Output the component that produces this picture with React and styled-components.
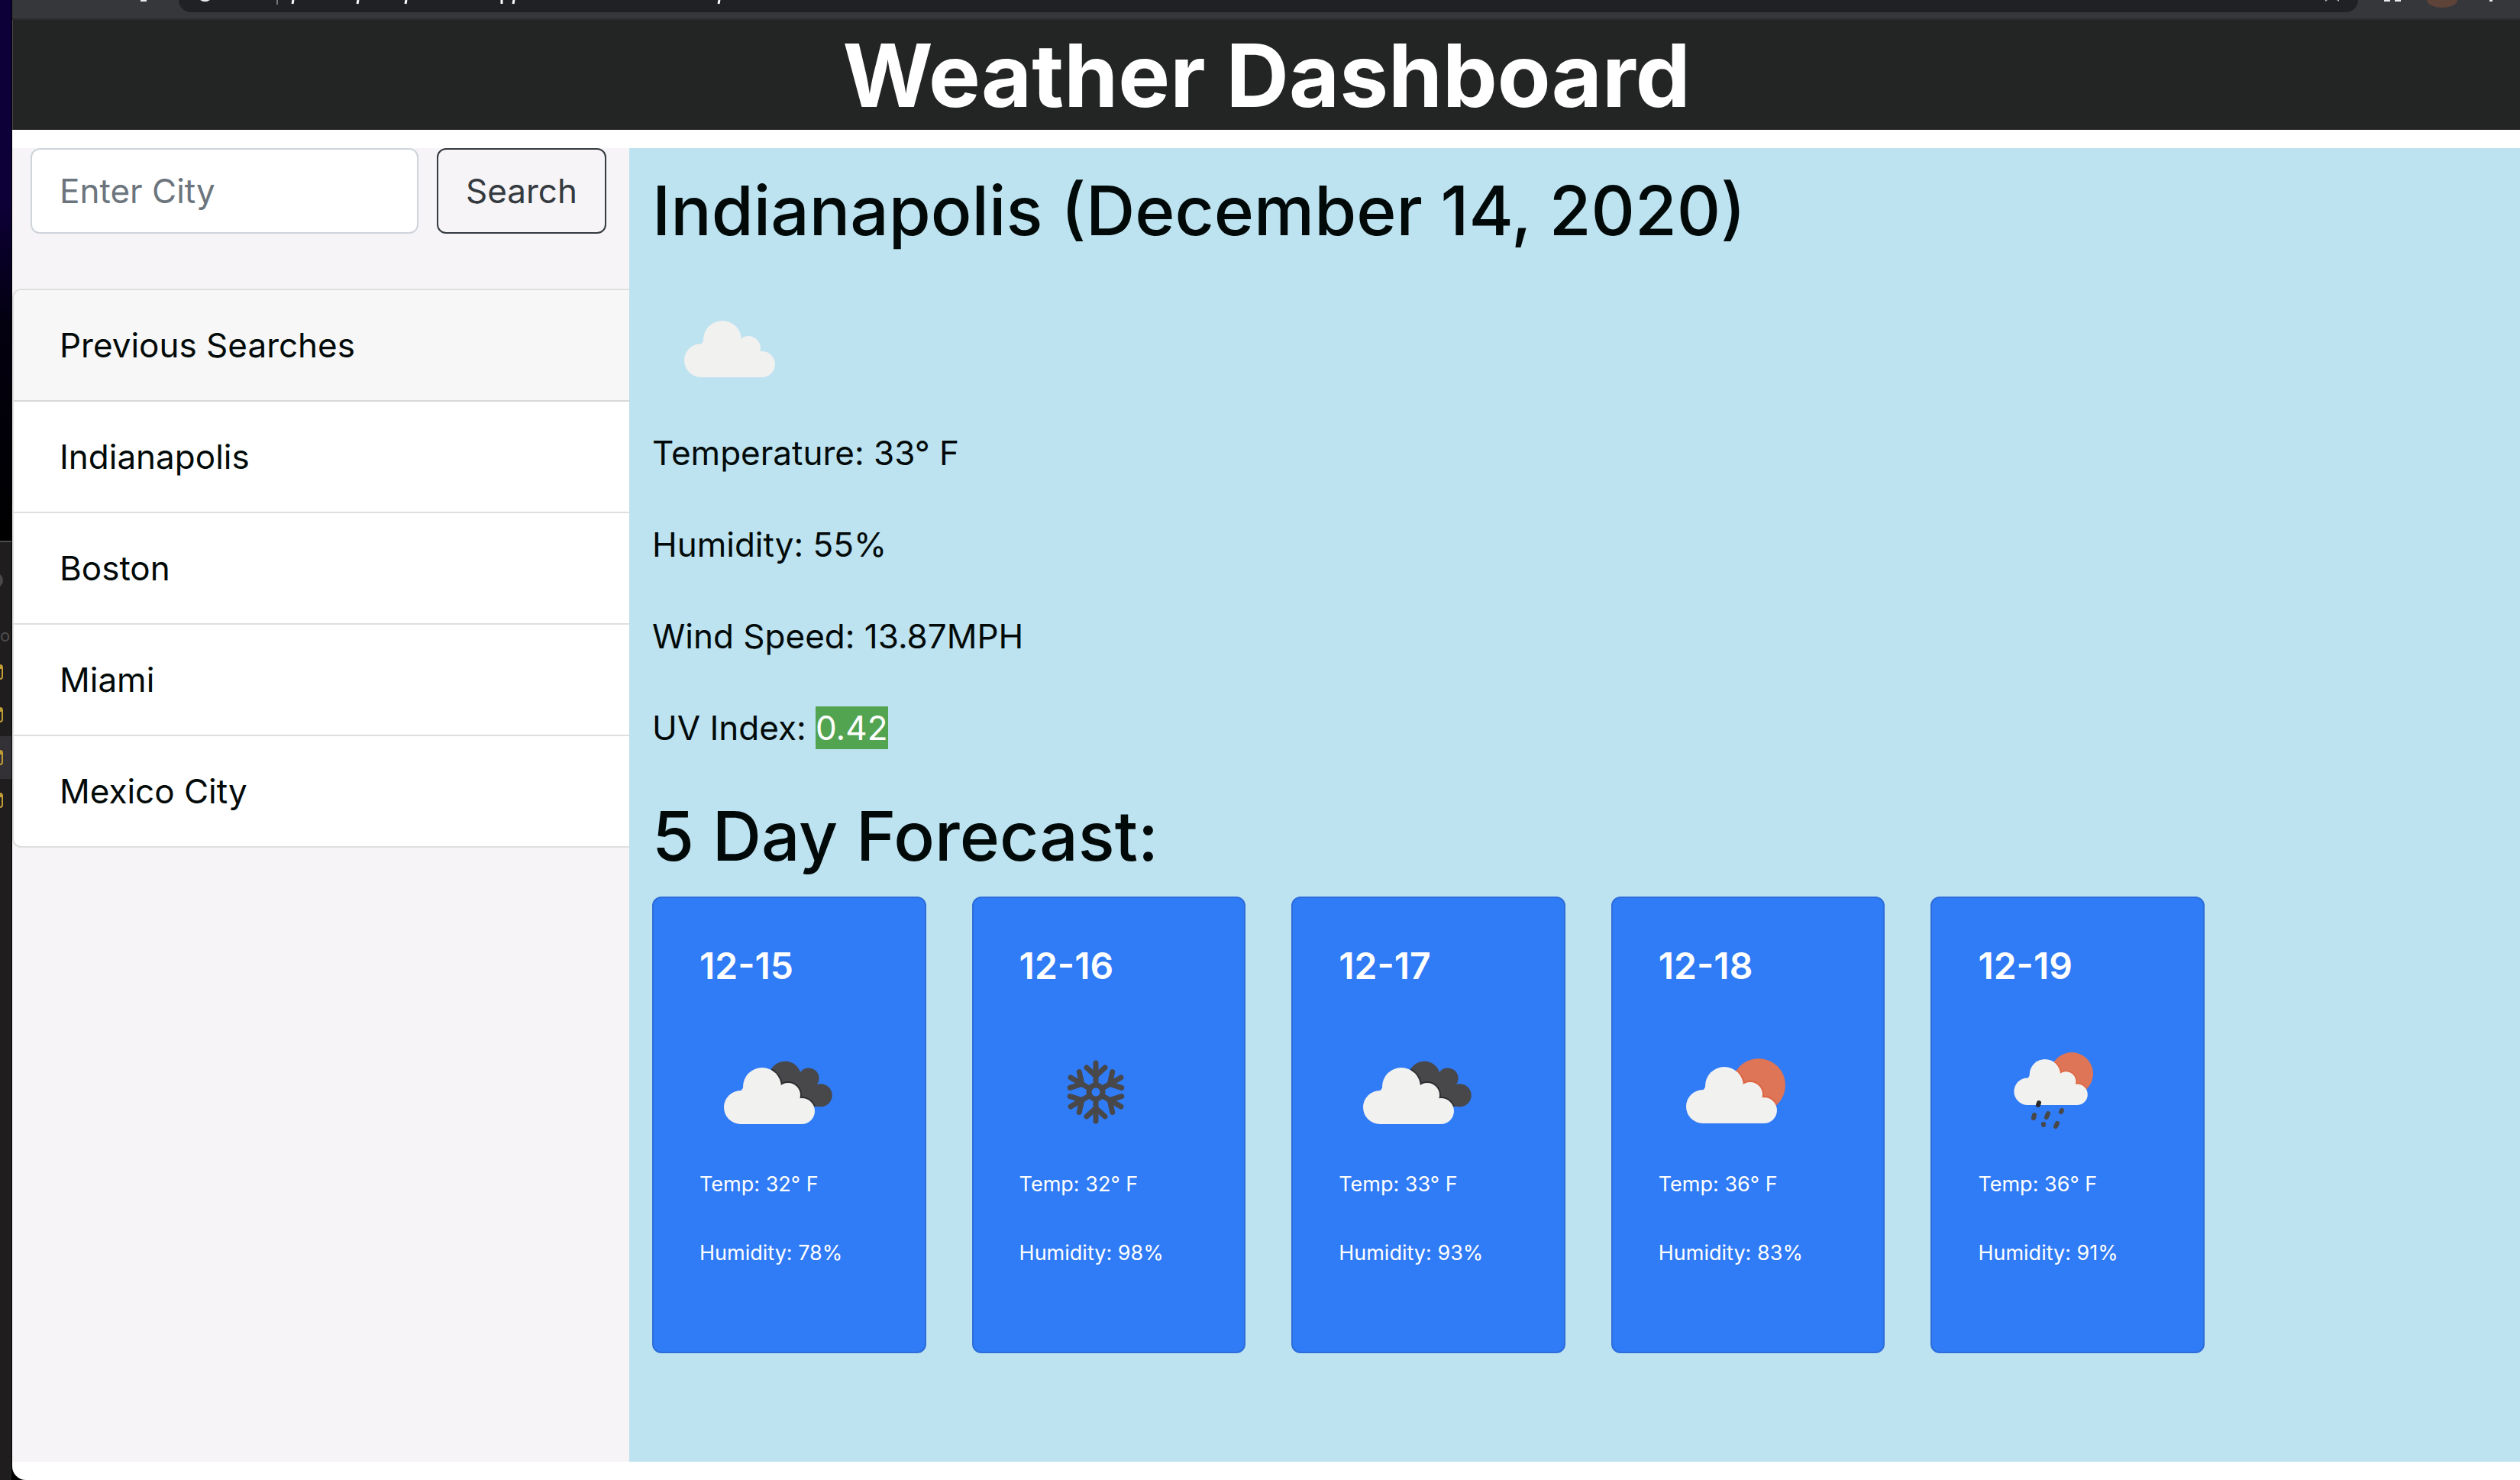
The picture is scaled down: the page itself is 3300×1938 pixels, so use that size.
import React, { useId } from "react";
import styled, { createGlobalStyle } from "styled-components";

const GlobalStyle = createGlobalStyle`
  *, *::before, *::after { box-sizing: border-box; }
  html, body, #root { height: 100%; margin: 0; }
  body {
    background: #000;
    color: #020a09;
    font-family: Inter, "Liberation Sans", sans-serif;
    font-size: 44px;
    line-height: 72px;
    overflow: hidden;
  }
`;

const Desktop = styled.div`
  display: flex;
  height: 100vh;
`;

const BackgroundStrip = styled.div`
  flex: 0 0 16px;
  display: flex;
  flex-direction: column;
  overflow: hidden;
  border-right: 1px solid #000;
  background: linear-gradient(#0d0038 0, #0d0038 260px, #030010 420px, #000 700px);
`;

const EditorPeek = styled.div`
  flex: 1;
  margin-top: 708px;
  padding-top: 40px;
  border-top: 2px solid #4c4a4b;
  background: #1f1d1e;
`;

const PeekDot = styled.div`
  width: 20px;
  height: 20px;
  margin-left: -16px;
  border-radius: 50%;
  background: #4a494a;
`;

const PeekLabel = styled.div`
  height: 82px;
  padding-top: 42px;
  color: #4f4e50;
  font-size: 22px;
  line-height: 40px;
`;

const PeekRow = styled.div`
  display: flex;
  align-items: center;
  height: 56px;
  margin-left: -16px;
  background: ${(p) => (p.$active ? "#343136" : "transparent")};
`;

const PeekIcon = styled.span`
  width: 20px;
  height: 20px;
  border: 2px solid #c09c35;
  border-top-width: 6px;
  border-radius: 4px;
`;

const Window = styled.div`
  flex: 1;
  min-width: 0;
  display: flex;
  flex-direction: column;
  background: #fff;
  border-bottom-left-radius: 18px;
  overflow: hidden;
`;

const Toolbar = styled.div`
  display: flex;
  align-items: flex-start;
  height: 26px;
  padding: 0 36px 0 168px;
  background: #36373b;
  border-bottom: 2px solid #2a2c2d;
`;

const ToolbarMark = styled.span`
  width: ${(p) => p.$width}px;
  height: 2px;
  background: #e8eaed;
`;

const AddressBar = styled.div`
  flex: 1;
  display: flex;
  align-items: flex-start;
  height: 16px;
  margin: 0 34px 0 42px;
  padding: 0 24px 0 36px;
  border-radius: 0 0 28px 28px;
  background: #202125;
`;

const AddressMarks = styled.svg`
  display: block;
  width: 700px;
  height: 6px;
  overflow: visible;
`;

const StarMarks = styled.svg`
  display: block;
  width: 20px;
  height: 3px;
  margin-left: auto;
`;

const Extensions = styled.div`
  display: flex;
  gap: 6px;
`;

const Avatar = styled.div`
  width: 40px;
  height: 10px;
  margin: 0 42px 0 34px;
  border-radius: 0 0 20px 20px / 0 0 10px 10px;
  background: #5e4339;
`;

const Header = styled.header`
  flex: 0 0 144px;
  margin-bottom: 24px;
  padding-top: 2px;
  border-left: 1px solid #4a4b4a;
  background: #232524;
`;

const Title = styled.h1`
  margin: 0;
  color: #fff;
  font-size: 114px;
  font-weight: 700;
  line-height: 142px;
  text-align: center;
`;

const Body = styled.div`
  flex: 1;
  display: flex;
  min-height: 0;
  margin-bottom: 24px;
`;

const Sidebar = styled.aside`
  flex: 0 0 808px;
  min-width: 0;
  background: #f6f4f6;
`;

const SearchForm = styled.form`
  display: flex;
  gap: 24px;
  padding: 0 30px 72px 24px;
`;

const CityInput = styled.input`
  flex: 1;
  width: 100%;
  min-width: 0;
  height: 112px;
  padding: 18px 36px;
  border: 2px solid #ced4da;
  border-radius: 12px;
  background: #fff;
  color: #495057;
  font: inherit;
  &::placeholder { color: #6c757d; opacity: 1; }
`;

const SearchButton = styled.button`
  height: 112px;
  padding: 0 36px;
  border: 2px solid #343a40;
  border-radius: 12px;
  background: transparent;
  color: #343a40;
  font: inherit;
`;

const HistoryCard = styled.section`
  border: 2px solid #dfdfdf;
  border-right: 0;
  border-radius: 12px 0 0 12px;
  background: #fff;
  overflow: hidden;
`;

const HistoryTitle = styled.div`
  padding: 36px 60px;
  border-bottom: 2px solid #d8d8d8;
  background: #f7f7f7;
`;

const HistoryList = styled.ul`
  margin: 0;
  padding: 0;
  list-style: none;
`;

const HistoryItem = styled.li`
  padding: 36px 60px;
  border-bottom: 2px solid #dfdfdf;
  &:last-child { border-bottom: 0; }
`;

const Main = styled.main`
  flex: 1;
  min-width: 0;
  padding: 24px 30px;
  background: #bde2f0;
`;

const Heading = styled.h2`
  margin: 0 0 ${(p) => p.$gap}px;
  font-size: 89px;
  font-weight: 500;
  line-height: 115px;
`;

const Reading = styled.p`
  margin: 0 0 48px;
`;

const UvBadge = styled.span`
  padding: 1px 0;
  background: #53a451;
  color: #fff;
`;

const Icon = styled.svg`
  display: block;
  width: 200px;
  height: 200px;
`;

const Forecast = styled.div`
  display: grid;
  grid-template-columns: repeat(5, 1fr);
  gap: 60px;
  max-width: 2033px;
`;

const DayCard = styled.article`
  padding: 60px;
  border: 2px solid #2c6dda;
  border-radius: 12px;
  background: #307bf6;
  color: #fff;
`;

const DayTitle = styled.h5`
  margin: 0 0 36px;
  font-size: 48px;
  font-weight: 600;
  line-height: 58px;
`;

const DayText = styled.p`
  margin: 0 0 48px;
  font-size: 27px;
  line-height: 42px;
`;

const CloudShape = () => (
  <>
    <circle cx="54" cy="120" r="22" />
    <circle cx="82" cy="93" r="25" />
    <circle cx="116" cy="104" r="16" />
    <circle cx="134" cy="125" r="17" />
    <path d="M54 99 L60 90 L104 90 L126 110 L134 142 H54 Z" />
  </>
);

const DARK_CLOUD =
  "M94 70 A21 21 0 0 1 132 74 A13 13 0 0 1 154 90 A15 15 0 1 1 156 119 H120 Z";

/* White cloud with a darker rim where it overlaps the shape behind it. */
const LayeredCloud = ({ behind, fill, rim, place }) => {
  const id = useId();
  return (
    <>
      <clipPath id={id}>{behind}</clipPath>
      <g fill={fill}>{behind}</g>
      <g clipPath={`url(#${id})`}>
        <g transform={place} fill={rim} stroke={rim} strokeWidth="4">
          <CloudShape />
        </g>
      </g>
      <g transform={place} fill="#f1f1f0">
        <CloudShape />
      </g>
    </>
  );
};

const CloudyIcon = () => (
  <Icon viewBox="0 0 200 200" aria-hidden="true">
    <g transform="translate(10 -5)" fill="#f1f1f0">
      <CloudShape />
    </g>
  </Icon>
);

const BrokenCloudsIcon = () => (
  <Icon viewBox="0 0 200 200" aria-hidden="true">
    <LayeredCloud behind={<path d={DARK_CLOUD} />} fill="#48484a" rim="#2e2f31" />
  </Icon>
);

const SunCloudIcon = () => (
  <Icon viewBox="0 0 200 200" aria-hidden="true">
    <LayeredCloud
      behind={<circle cx="131" cy="91" r="35" />}
      fill="#dd7556"
      rim="#df6441"
      place="translate(4 -1)"
    />
  </Icon>
);

const DROPS = [
  [73, 134, 74, 130],
  [90, 133, 92, 128],
  [109, 126, 110, 124],
  [86, 142, 86, 143],
  [102, 145, 104, 141],
];

const RainIcon = () => (
  <Icon viewBox="0 0 200 200" aria-hidden="true">
    <LayeredCloud
      behind={<circle cx="123" cy="76" r="28" />}
      fill="#dd7556"
      rim="#df6441"
      place="translate(21.5 2) scale(0.81)"
    />
    <g stroke="#48484a" strokeWidth="6" strokeLinecap="round">
      <line x1="79" y1="117" x2="80" y2="114" stroke="#2a2b2d" />
      {DROPS.map(([x1, y1, x2, y2]) => (
        <line key={x1} x1={x1} y1={y1} x2={x2} y2={y2} />
      ))}
    </g>
  </Icon>
);

const SnowIcon = () => (
  <Icon viewBox="0 0 200 200" aria-hidden="true">
    <g stroke="#48484a" strokeWidth="7" strokeLinecap="round" strokeLinejoin="round" fill="none">
      <circle cx="100" cy="100" r="9" />
      {[0, 60, 120, 180, 240, 300].map((a) => (
        <path key={a} d="M100 90 V62 M88 68 L100 79 L112 68" transform={`rotate(${a} 100 100)`} />
      ))}
    </g>
  </Icon>
);

const SEARCHES = ["Indianapolis", "Boston", "Miami", "Mexico City"];

const DAYS = [
  { date: "12-15", Picture: BrokenCloudsIcon, temp: 32, humidity: 78 },
  { date: "12-16", Picture: SnowIcon, temp: 32, humidity: 98 },
  { date: "12-17", Picture: BrokenCloudsIcon, temp: 33, humidity: 93 },
  { date: "12-18", Picture: SunCloudIcon, temp: 36, humidity: 83 },
  { date: "12-19", Picture: RainIcon, temp: 36, humidity: 91 },
];

export default function App() {
  return (
    <>
      <GlobalStyle />
      <Desktop>
        <BackgroundStrip aria-hidden="true">
          <EditorPeek>
            <PeekDot />
            <PeekLabel>o</PeekLabel>
            <PeekRow><PeekIcon /></PeekRow>
            <PeekRow><PeekIcon /></PeekRow>
            <PeekRow $active><PeekIcon /></PeekRow>
            <PeekRow><PeekIcon /></PeekRow>
          </EditorPeek>
        </BackgroundStrip>
        <Window>
          <Toolbar aria-hidden="true">
            <ToolbarMark $width={8} />
            <AddressBar>
              <AddressMarks viewBox="0 0 700 6">
                <path d="M-8 0 H5 L1 2 H-4 Z" fill="#e8eaed" />
                <path d="M93 0 V6" stroke="#76777a" strokeWidth="2" />
                <path d="M114 0 l-1 5 M199 0 l-1 5 M262 0 l-1 5 M387 0 V5 M403 0 l-1 5 M672 0 l-1 5" stroke="#fff" strokeWidth="3" />
              </AddressMarks>
              <StarMarks viewBox="0 0 20 3">
                <path d="M1 0 h3 l-3 2 M19 0 h-3 l3 2" fill="#bdc1c6" />
              </StarMarks>
            </AddressBar>
            <Extensions>
              <ToolbarMark $width={8} />
              <ToolbarMark $width={8} />
            </Extensions>
            <Avatar />
            <ToolbarMark $width={4} />
          </Toolbar>
          <Header>
            <Title>Weather Dashboard</Title>
          </Header>
          <Body>
            <Sidebar>
              <SearchForm onSubmit={(e) => e.preventDefault()}>
                <CityInput type="text" placeholder="Enter City" aria-label="Enter City" />
                <SearchButton type="submit">Search</SearchButton>
              </SearchForm>
              <HistoryCard>
                <HistoryTitle>Previous Searches</HistoryTitle>
                <HistoryList>
                  {SEARCHES.map((city) => (
                    <HistoryItem key={city}>{city}</HistoryItem>
                  ))}
                </HistoryList>
              </HistoryCard>
            </Sidebar>
            <Main>
              <Heading $gap={24}>Indianapolis (December 14, 2020)</Heading>
              <CloudyIcon />
              <Reading>Temperature: 33° F</Reading>
              <Reading>Humidity: 55%</Reading>
              <Reading>Wind Speed: 13.87MPH</Reading>
              <Reading>UV Index: <UvBadge>0.42</UvBadge></Reading>
              <Heading $gap={22}>5 Day Forecast:</Heading>
              <Forecast>
                {DAYS.map(({ date, Picture, temp, humidity }) => (
                  <DayCard key={date}>
                    <DayTitle>{date}</DayTitle>
                    <Picture />
                    <DayText>Temp: {temp}° F</DayText>
                    <DayText>Humidity: {humidity}%</DayText>
                  </DayCard>
                ))}
              </Forecast>
            </Main>
          </Body>
        </Window>
      </Desktop>
    </>
  );
}
